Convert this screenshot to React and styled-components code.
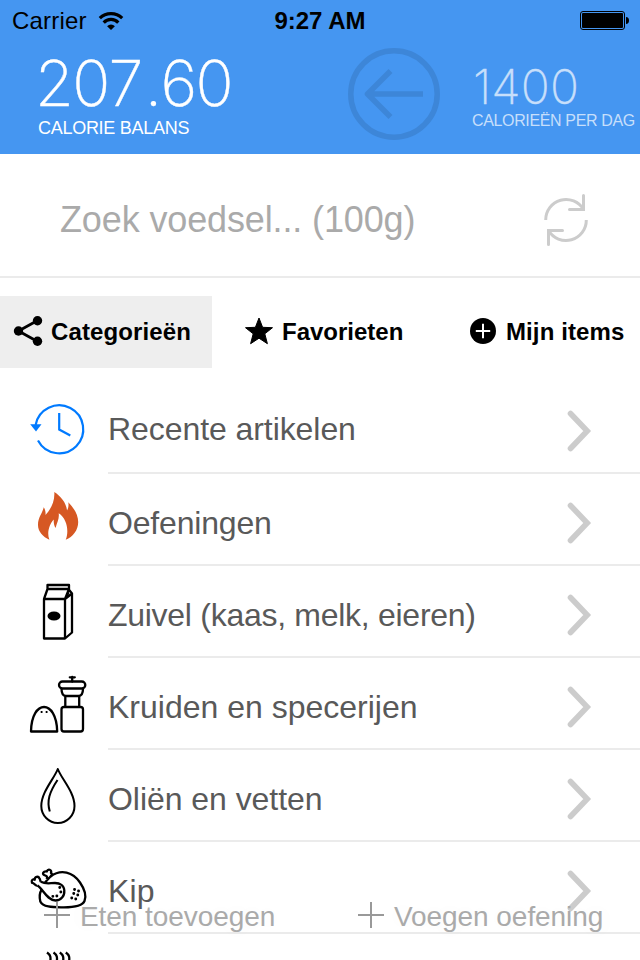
import React from 'react';
import styled, { createGlobalStyle } from 'styled-components';

const GlobalStyle = createGlobalStyle`
  * { box-sizing: border-box; }
  body { margin: 0; background: #fff; font-family: "Liberation Sans", Arial, sans-serif; }
  svg { display: block; flex: none; }
`;

const Screen = styled.div`
  position: relative;
  width: 640px;
  height: 960px;
  overflow: hidden;
  background: #fff;
`;

const Header = styled.header`
  height: 154px;
  background: #4596f1;
`;

const StatusBar = styled.div`
  display: grid;
  grid-template-columns: 1fr auto 1fr;
  align-items: center;
  height: 40px;
  padding: 1px 11px 0 11px;
  font-size: 24px;
  line-height: 40px;
  color: #000;
`;

const Carrier = styled.div`
  display: flex;
  align-items: center;
  gap: 11px;
  padding-left: 1px;
  letter-spacing: 0.2px;
`;

const Clock = styled.div`
  font-weight: bold;
`;

const BatterySlot = styled.div`
  display: flex;
  justify-content: flex-end;
`;

const Summary = styled.div`
  display: grid;
  grid-template-columns: 348px 124px 1fr;
  align-items: start;
`;

const Balance = styled.div`
  padding: 11px 0 0 38px;
  color: #fff;
  white-space: nowrap;
`;

const BalanceValue = styled.div`
  margin-left: -3px;
  font: 200 63px/64px Inter, sans-serif;
  letter-spacing: -1.7px;
  font-kerning: none;
  -webkit-text-stroke: 0.4px currentColor;
`;

const Point = styled.span`
  margin: 0 0 0 3px;
`;

const BalanceLabel = styled.div`
  margin-top: 3px;
  font-size: 18px;
  line-height: 20px;
  letter-spacing: -0.28px;
`;

const BackButton = styled.button`
  margin: 8px 0 0;
  padding: 0;
  border: 0;
  width: 92px;
  height: 92px;
  background: none;
`;

const Goal = styled.div`
  padding-top: 23px;
  color: #c7dffb;
  white-space: nowrap;
`;

const GoalValue = styled.div`
  margin-left: 1px;
  font: 200 48px/48px Inter, sans-serif;
  letter-spacing: 0.1px;
  -webkit-text-stroke: 0.3px currentColor;
`;

const GoalLabel = styled.div`
  margin-top: 1px;
  font-size: 16px;
  line-height: 18px;
  letter-spacing: -0.36px;
`;

const Search = styled.div`
  display: flex;
  align-items: center;
  justify-content: space-between;
  height: 124px;
  padding: 10px 50px 0 60px;
  border-bottom: 2px solid #ebebeb;
`;

const Placeholder = styled.span`
  font-size: 36px;
  line-height: 44px;
  letter-spacing: -0.13px;
  color: #aaa;
`;

const Tabs = styled.nav`
  display: grid;
  grid-template-columns: 212px 216px 212px;
  height: 72px;
  margin-top: 18px;
`;

const Tab = styled.div`
  display: flex;
  align-items: center;
  gap: ${(p) => p.$gap}px;
  padding-left: ${(p) => p.$inset}px;
  background: ${(p) => (p.$active ? '#eeeeee' : 'transparent')};
  font-size: 24px;
  font-weight: bold;
  letter-spacing: ${(p) => p.$tracking || 0}px;
  color: #000;
  white-space: nowrap;
`;

const List = styled.ul`
  margin: 14px 0 0;
  padding: 0;
  list-style: none;
`;

const Row = styled.li`
  display: flex;
  height: 92px;
`;

const RowBody = styled.div`
  flex: 1;
  display: flex;
  align-items: center;
  justify-content: space-between;
  padding: 7px 48px 0 0;
  border-bottom: 2px solid #ebebeb;
`;

const RowTitle = styled.span`
  margin-bottom: ${(p) => (p.$raised ? 4 : 0)}px;
  font-size: 32px;
  line-height: 40px;
  letter-spacing: ${(p) => p.$tracking || 0}px;
  color: #595959;
`;

const ActionBar = styled.div`
  position: absolute;
  left: 0;
  right: 0;
  bottom: 22px;
  display: grid;
  grid-template-columns: 314px 1fr;
  padding-left: 44px;
`;

const Action = styled.div`
  display: flex;
  align-items: center;
  gap: 10px;
  height: 46px;
  font-size: 28px;
  letter-spacing: -0.06px;
  color: #aaa;
  text-shadow: 0 0 24px rgba(0, 0, 0, 0.06);
`;

const ActionText = styled.span`
  padding-top: 3px;
`;

const Wifi = () => (
  <svg width="26" height="18" viewBox="97.5 11 26 18" fill="none" stroke="#000" strokeWidth="3.2">
    <path d="M99.3 17.2A16 16 0 0 1 121.7 17.2" />
    <path d="M103.2 21.6A10 10 0 0 1 117.8 21.6" />
    <path d="M106.6 25.2A5.4 5.4 0 0 1 114.4 25.2L110.5 29Z" fill="#000" stroke="none" />
  </svg>
);

const Battery = () => (
  <svg width="49" height="20" viewBox="580 10.5 49 20">
    <rect x="580.5" y="11" width="44" height="18" rx="2.5" fill="none" stroke="#000" />
    <rect x="582" y="12.5" width="41" height="15" rx="1" />
    <path d="M626 16.500C628 16.500 629 18 629 20S628 23.500 626 23.500Z" />
  </svg>
);

const BackArrow = () => (
  <svg width="92" height="92" viewBox="348 48 92 92" fill="none" stroke="#3d86d8" strokeWidth="5.5">
    <circle cx="394" cy="94" r="43.2" />
    <path d="M423 94H367M390.500 71L367.500 94L390.500 117" strokeLinejoin="round" />
  </svg>
);

const Refresh = () => (
  <svg width="48" height="54" viewBox="542 193 48 54" fill="none" stroke="#ccc" strokeWidth="3" strokeLinecap="round">
    <path d="M545.700 220A20.300 20.300 0 0 1 583.500 209.500" strokeLinecap="butt" />
    <path d="M583.500 195.500V209.500H569.500" />
    <path d="M586.300 220A20.300 20.300 0 0 1 548.500 230.500" strokeLinecap="butt" />
    <path d="M548.500 244.500V230.500H562.500" />
  </svg>
);

const ShareIcon = () => (
  <svg width="30" height="32" viewBox="13 316 30 32">
    <path d="M37.500 320.500L18.500 331L37.500 341.500" fill="none" stroke="#000" strokeWidth="2.8" />
    <circle cx="18.500" cy="331" r="4.700" />
    <circle cx="37.500" cy="320.700" r="4.700" />
    <circle cx="37.500" cy="341.300" r="4.700" />
  </svg>
);

const StarIcon = () => (
  <svg width="28" height="30" viewBox="245 317 28 30">
    <path
      d="M259 318L262.600 327.300L272.500 327.700L264.800 333.800L267.400 343.700L259 338.200L250.600 343.700L253.200 333.800L245.500 327.700L255.400 327.300Z"
      stroke="#000"
      strokeLinejoin="round"
    />
  </svg>
);

const PlusCircle = () => (
  <svg width="26" height="28" viewBox="470 318 26 28">
    <circle cx="483" cy="331" r="13" />
    <path d="M475.800 331H490.200M483 323.800V338.200" stroke="#fff" strokeWidth="2" />
  </svg>
);

const Chevron = () => (
  <svg width="26" height="44" viewBox="566 408.500 26 44" fill="none" stroke="#ccc" strokeWidth="5.600" strokeLinecap="round">
    <path d="M570.500 413L587.200 430.500L570.500 448" />
  </svg>
);

const ThinPlus = () => (
  <svg width="26" height="26" viewBox="0 0 26 26" stroke="#999" strokeWidth="2">
    <path d="M0 13H26M13 0V26" />
  </svg>
);

/* Row drawings share one 108x92 cell; `top` is the y at which the row starts. */
const RowIcon = ({ top, children }) => (
  <svg width="108" height="92" viewBox={`0 ${top} 108 92`} fill="none" stroke="#000" strokeWidth="2.3" strokeLinejoin="round">
    {children}
  </svg>
);

const History = () => (
  <RowIcon top={382}>
    <g stroke="#007aff" strokeWidth="2.200" strokeLinejoin="miter">
      <path d="M35.600 425A24 24 0 1 1 38 440.500" />
      <path d="M59.200 413V429.500L70.300 435.500" />
      <path d="M30.200 424.300H41.500L36 431.500Z" fill="#007aff" stroke="none" />
    </g>
  </RowIcon>
);

const Flame = () => (
  <RowIcon top={474}>
    <path
      fill="#d65823"
      stroke="none"
      d="M54.300 492C60.500 496 66.500 503 67 510.500C68.500 508 68.800 505 68.300 502.300C74 508 78.200 515 78.200 522C78.200 530 73 537 65.700 539.800C69 532 67.500 519 58.700 513.300C59.500 519 57 522 55.600 528C54 525.500 53.500 523 53.800 519.500C49.500 524 46.500 533 49.400 539.800C43 537 38 531.500 38 525C38 517 42.500 513.500 43.700 507.200C45.200 509.500 45.800 512 45.500 515C50.500 509.500 55 502 54.300 492Z"
    />
  </RowIcon>
);

const Milk = () => (
  <RowIcon top={566}>
    <path d="M47.500 589V585H69V589ZM47.500 589L44 599H65L69 589M44 599V638.500H65V599M65 638.500L72 632.500V593.500L69.200 590M65 599L72 593.500" />
    <path d="M67 597L68.800 592.500" strokeWidth="1.600" />
    <ellipse cx="54" cy="616" rx="6.500" ry="4.500" fill="#000" stroke="none" />
  </RowIcon>
);

const SaltPepper = () => (
  <RowIcon top={658}>
    <path d="M31 731.500C31.500 698.800 56.500 698.800 57.200 731.500Z" />
    <path d="M69.800 677.300H74.800M72.200 677V681.500" strokeLinecap="round" />
    <rect x="59" y="681.500" width="26.300" height="7" rx="3.500" />
    <path d="M61.500 688.500C61.500 693.500 62.500 696 66 696H78.500C82 696 83 693.500 83 688.500M65.300 696V707M79.200 696V707" />
    <rect x="61.500" y="707" width="21.500" height="24.500" rx="2.500" />
    <path d="M40.700 712H42.500M45.700 712H47.500" strokeWidth="1.800" />
  </RowIcon>
);

const Drop = () => (
  <RowIcon top={750}>
    <path d="M57.800 769C54 779 41.300 792 41.300 806A16.600 17 0 0 0 74.500 806C74.500 792 61.500 779 57.800 769Z" strokeWidth="2" />
    <path d="M57.500 780C49.500 792 46.500 801 49.800 811.500" strokeWidth="2" />
  </RowIcon>
);

const Chicken = () => (
  <RowIcon top={842}>
    <path d="M50.500 876.500C61 868.500 73 872 80 882.500C84.500 889 86.500 896 84.500 901C82 907 69 907.500 61 907.300C52 907.300 43 907 40.300 901.500C39.500 898 39.500 893 41.500 890" />
    <path d="M37.500 885.500C43 889 47 900.500 55.500 900.500C61 900.300 64.700 896 64.300 890.500C64 885.500 60 883 55 883C50 883 46 884.500 40.800 881.800" />
    <path d="M37.500 885.500C35 886.500 34.500 882.500 32 882.800C31 880 33 879 34.700 879.700C34.500 876.500 38.500 876 39.200 878C40.500 879.500 40 881 40.800 881.800" />
    <path d="M45 882.500L50.500 876.500C52.500 874.500 52.200 873.300 51 873C52 869.500 48 868.300 46.800 871.500C43.500 870.800 41.500 874 44.500 875.200C46.500 876 48 876.500 46.500 879" />
    <path
      d="M59.700 887.500h.1M60.800 892h.1M56.800 896h.1M52.800 896.300h.1M74.500 889.500h.1M78.500 891h.1M73.700 893.500h.1M77.700 895h.1M71.700 898h.1M75.700 899h.1"
      strokeWidth="2.800"
      strokeLinecap="round"
    />
  </RowIcon>
);

const Steam = () => (
  <RowIcon top={934}>
    <path d="M47 952.500C50.500 955 51 957 50.200 962M53.500 952.500C57 955 57.500 957 56.700 962M59.800 952.500C63.300 955 63.800 957 63 962M65.800 952.500C69.300 955 69.800 957 69 962" />
  </RowIcon>
);

const categories = [
  { title: 'Recente artikelen', Icon: History, raised: true, tracking: -0.07 },
  { title: 'Oefeningen', Icon: Flame, tracking: -0.18 },
  { title: 'Zuivel (kaas, melk, eieren)', Icon: Milk, tracking: -0.28 },
  { title: 'Kruiden en specerijen', Icon: SaltPepper },
  { title: 'Oliën en vetten', Icon: Drop, tracking: -0.05 },
  { title: 'Kip', Icon: Chicken, tracking: 0.2 },
];

export default function App() {
  return (
    <Screen>
      <GlobalStyle />
      <Header>
        <StatusBar>
          <Carrier>Carrier <Wifi /></Carrier>
          <Clock>9:27 AM</Clock>
          <BatterySlot><Battery /></BatterySlot>
        </StatusBar>
        <Summary>
          <Balance>
            <BalanceValue>207<Point>.</Point>60</BalanceValue>
            <BalanceLabel>CALORIE BALANS</BalanceLabel>
          </Balance>
          <BackButton><BackArrow /></BackButton>
          <Goal>
            <GoalValue>1400</GoalValue>
            <GoalLabel>CALORIEËN PER DAG</GoalLabel>
          </Goal>
        </Summary>
      </Header>
      <Search>
        <Placeholder>Zoek voedsel... (100g)</Placeholder>
        <Refresh />
      </Search>
      <Tabs>
        <Tab $active $inset={13} $gap={8} $tracking={0.12}><ShareIcon />Categorieën</Tab>
        <Tab $inset={33} $gap={9}><StarIcon />Favorieten</Tab>
        <Tab $inset={42} $gap={10} $tracking={0.1}><PlusCircle />Mijn items</Tab>
      </Tabs>
      <List>
        {categories.map(({ title, Icon, raised, tracking }) => (
          <Row key={title}>
            <Icon />
            <RowBody>
              <RowTitle $raised={raised} $tracking={tracking}>{title}</RowTitle>
              <Chevron />
            </RowBody>
          </Row>
        ))}
        <Row><Steam /></Row>
      </List>
      <ActionBar>
        <Action><ThinPlus /><ActionText>Eten toevoegen</ActionText></Action>
        <Action><ThinPlus /><ActionText>Voegen oefening</ActionText></Action>
      </ActionBar>
    </Screen>
  );
}
